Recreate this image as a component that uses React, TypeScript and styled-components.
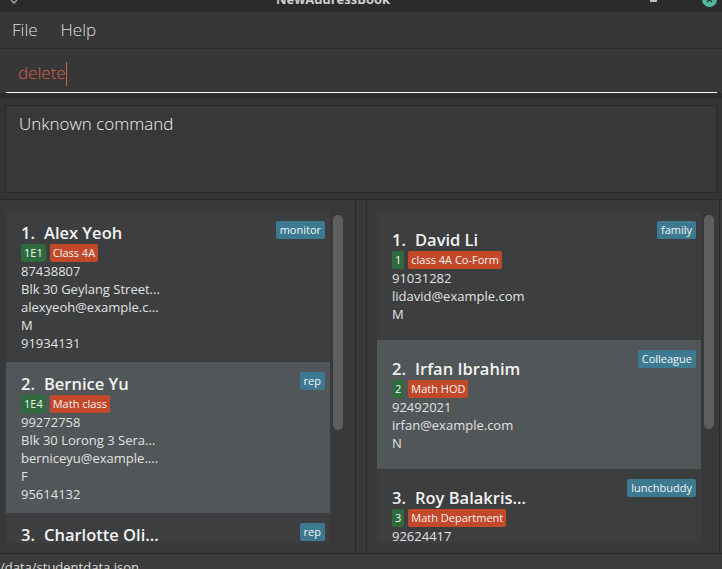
import React from "react";
import styled, { createGlobalStyle } from "styled-components";

const Global = createGlobalStyle`
  html, body { margin: 0; padding: 0; width: 722px; height: 569px; overflow: hidden; background: #333333; }
  #root { width: 722px; height: 569px; }
  * { box-sizing: border-box; }
`;

const Window = styled.div`
  width: 722px;
  height: 569px;
  display: flex;
  flex-direction: column;
  overflow: hidden;
  background: #333333;
  font-family: "Open Sans", "DejaVu Sans", sans-serif;
`;

const TitleBar = styled.div`
  height: 12px;
  flex: none;
  display: flex;
  align-items: flex-start;
  background: #2b2b2b;
  overflow: hidden;
`;

const TitleLeft = styled.div`
  width: 24px;
  flex: none;
  padding-left: 10px;
  display: flex;
`;

const TitleText = styled.div`
  flex: 1;
  text-align: center;
  font-size: 13px;
  font-weight: 700;
  line-height: 16px;
  margin-top: -9px;
  color: #cfcfcf;
  white-space: nowrap;
`;

const TitleControls = styled.div`
  width: 80px;
  flex: none;
  display: flex;
  align-items: flex-start;
  padding-left: 8px;
`;

const MinBtn = styled.div`
  width: 7px;
  height: 2px;
  background: #bdbdbd;
`;

const MaxBtn = styled.div`
  margin-left: 20px;
  width: 8px;
  height: 4px;
  margin-top: -4px;
  border: 1px solid #bdbdbd;
`;

const CloseBtn = styled.div`
  margin-left: 17px;
  width: 15px;
  height: 15px;
  margin-top: -8px;
  border-radius: 50%;
  background: #4db89c;
  display: flex;
  align-items: center;
  justify-content: center;
`;

const MenuBar = styled.div`
  height: 37px;
  flex: none;
  display: flex;
  align-items: center;
  gap: 23px;
  padding-left: 12px;
  background: #373737;
  border-bottom: 1px solid #2a2a2a;
  color: #dedede;
  font-size: 17px;
  font-weight: 300;
`;

const MenuItem = styled.span`
  line-height: 24px;
`;

const CommandPane = styled.div`
  height: 44px;
  flex: none;
  padding: 0 5px 0 6px;
  background: #373737;
`;

const CommandField = styled.div`
  height: 44px;
  padding: 12px 0 0 12px;
  border-bottom: 1px solid #ffffff;
  display: flex;
  align-items: flex-start;
  font-size: 17px;
  font-weight: 300;
  line-height: 23px;
  color: #d0604a;
`;

const Caret = styled.span`
  width: 1px;
  height: 24px;
  margin-top: 1px;
  background: #d0604a;
`;

const ResultPane = styled.div`
  flex: none;
  border-top: 6px solid #2c2c2c;
  background: #333333;
  padding: 6px 5px;
`;

const ResultBox = styled.div`
  height: 88px;
  border: 1px solid #2a2a2a;
  background: #383838;
  padding: 6px 13px;
  font-size: 17px;
  font-weight: 300;
  line-height: 24px;
  color: #f0f0f0;
`;

const SplitArea = styled.div`
  height: 354px;
  flex: none;
  display: flex;
  background: #383838;
  border-top: 1px solid #2a2a2a;
`;

const ListPane = styled.div<{ $side: "left" | "right" }>`
  flex: none;
  width: ${(p) => (p.$side === "left" ? 356 : 354)}px;
  display: flex;
  align-items: flex-start;
  padding: 11px 0 10px ${(p) => (p.$side === "left" ? 6 : 10)}px;
  border-right: 1px solid #2a2a2a;
  border-left: ${(p) => (p.$side === "right" ? "1px solid #2a2a2a" : "none")};
  background: #393939;
`;

const Divider = styled.div`
  width: 10px;
  flex: none;
  background: #383838;
`;

const Viewport = styled.div`
  width: 324px;
  height: 332px;
  overflow: hidden;
  display: flex;
  flex-direction: column;
`;

const ScrollTrack = styled.div`
  width: 10px;
  height: 332px;
  margin-left: 3px;
  padding-top: 4px;
`;

const ScrollThumb = styled.div<{ $h: number }>`
  width: 10px;
  height: ${(p) => p.$h}px;
  border-radius: 5px;
  background: #5e5e5e;
`;

const Card = styled.div<{ $alt: boolean; $top: number; $bottom: number }>`
  position: relative;
  flex: none;
  background: ${(p) => (p.$alt ? "#515658" : "#3c3e40")};
  padding: ${(p) => p.$top}px 15px ${(p) => p.$bottom}px 15px;
`;

const NameRow = styled.div`
  font-size: 16.5px;
  font-weight: 600;
  line-height: 22px;
  color: #f2f2f2;
  white-space: nowrap;
`;

const IdText = styled.span`
  margin-right: 9px;
`;

const TagRow = styled.div`
  display: flex;
  gap: 4px;
  height: 18px;
`;

const Tag = styled.span<{ $kind: "grade" | "cls" | "role" }>`
  display: inline-block;
  font-size: 11px;
  line-height: 18px;
  height: 18px;
  padding: 0 ${(p) => (p.$kind === "role" ? 4 : 3)}px;
  border-radius: 2px;
  color: #f4f4f4;
  white-space: nowrap;
  background: ${(p) =>
    p.$kind === "grade" ? "#2f6a3c" : p.$kind === "cls" ? "#c2482a" : "#3d7a91"};
`;

const CornerTag = styled(Tag)`
  position: absolute;
  top: 10px;
  right: 5px;
`;

const Detail = styled.div`
  font-size: 13px;
  line-height: 18px;
  color: #e2e2e2;
  white-space: nowrap;
`;

const StatusBar = styled.div`
  height: 16px;
  flex: none;
  overflow: hidden;
  background: #3c3c3c;
  border-top: 1px solid #2a2a2a;
  padding: 4px 0 0 0;
  font-size: 13px;
  line-height: 18px;
  color: #dcdcdc;
  white-space: nowrap;
`;

type Person = {
  id: number;
  name: string;
  grade: string;
  cls: string;
  role: string;
  details: string[];
};

const leftPeople: Person[] = [
  {
    id: 1,
    name: "Alex Yeoh",
    grade: "1E1",
    cls: "Class 4A",
    role: "monitor",
    details: ["87438807", "Blk 30 Geylang Street...", "alexyeoh@example.c...", "M", "91934131"],
  },
  {
    id: 2,
    name: "Bernice Yu",
    grade: "1E4",
    cls: "Math class",
    role: "rep",
    details: ["99272758", "Blk 30 Lorong 3 Sera...", "berniceyu@example....", "F", "95614132"],
  },
  {
    id: 3,
    name: "Charlotte Oli...",
    grade: "1E2",
    cls: "Class 4B",
    role: "rep",
    details: ["93210283", "Blk 11 Ang Mo Kio S...", "charlotte@example....", "F", "93210284"],
  },
];

const rightPeople: Person[] = [
  {
    id: 1,
    name: "David Li",
    grade: "1",
    cls: "class 4A Co-Form",
    role: "family",
    details: ["91031282", "lidavid@example.com", "M"],
  },
  {
    id: 2,
    name: "Irfan Ibrahim",
    grade: "2",
    cls: "Math HOD",
    role: "Colleague",
    details: ["92492021", "irfan@example.com", "N"],
  },
  {
    id: 3,
    name: "Roy Balakris...",
    grade: "3",
    cls: "Math Department",
    role: "lunchbuddy",
    details: ["92624417", "royb@example.com", "M"],
  },
];

function PersonCard({ p, alt, top, bottom }: { p: Person; alt: boolean; top: number; bottom: number }) {
  return (
    <Card $alt={alt} $top={top} $bottom={bottom}>
      <CornerTag $kind="role">{p.role}</CornerTag>
      <NameRow>
        <IdText>{p.id}.</IdText>
        {p.name}
      </NameRow>
      <TagRow>
        <Tag $kind="grade">{p.grade}</Tag>
        <Tag $kind="cls">{p.cls}</Tag>
      </TagRow>
      {p.details.map((d, i) => (
        <Detail key={i}>{d}</Detail>
      ))}
    </Card>
  );
}

export default function App() {
  return (
    <>
      <Global />
      <Window>
        <TitleBar>
          <TitleLeft>
            <svg width="8" height="4" viewBox="0 0 8 4">
              <path d="M1 0 L4 3 L7 0" stroke="#a8a8a8" strokeWidth="1.3" fill="none" />
            </svg>
          </TitleLeft>
          <TitleText>NewAddressBook</TitleText>
          <TitleControls>
            <MinBtn />
            <MaxBtn />
            <CloseBtn>
              <svg width="7" height="7" viewBox="0 0 7 7">
                <path d="M1 1 L6 6 M6 1 L1 6" stroke="#1f3b33" strokeWidth="1.4" />
              </svg>
            </CloseBtn>
          </TitleControls>
        </TitleBar>
        <MenuBar>
          <MenuItem>File</MenuItem>
          <MenuItem>Help</MenuItem>
        </MenuBar>
        <CommandPane>
          <CommandField>
            <span>delete</span>
            <Caret />
          </CommandField>
        </CommandPane>
        <ResultPane>
          <ResultBox>Unknown command</ResultBox>
        </ResultPane>
        <SplitArea>
          <ListPane $side="left">
            <Viewport>
              {leftPeople.map((p, i) => (
                <PersonCard key={p.id} p={p} alt={i % 2 === 1} top={11} bottom={10} />
              ))}
            </Viewport>
            <ScrollTrack>
              <ScrollThumb $h={215} />
            </ScrollTrack>
          </ListPane>
          <Divider />
          <ListPane $side="right">
            <Viewport>
              {rightPeople.map((p, i) => (
                <PersonCard key={p.id} p={p} alt={i % 2 === 1} top={18} bottom={17} />
              ))}
            </Viewport>
            <ScrollTrack>
              <ScrollThumb $h={214} />
            </ScrollTrack>
          </ListPane>
        </SplitArea>
        <StatusBar>/data/studentdata.json</StatusBar>
      </Window>
    </>
  );
}
